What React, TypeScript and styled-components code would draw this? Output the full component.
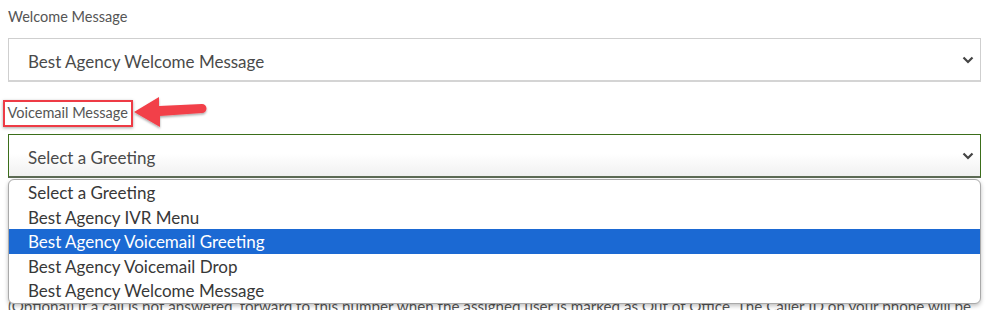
import styled, { createGlobalStyle } from 'styled-components';

const GlobalStyle = createGlobalStyle`
  html, body {
    margin: 0;
    padding: 0;
    background: #fff;
  }
  body {
    font-family: Lato, "Noto Sans", sans-serif;
    overflow: hidden;
  }
`;

const Page = styled.div`
  width: 987px;
  height: 310px;
  padding: 8px 6px 0 8px;
  box-sizing: border-box;
  overflow: hidden;
`;

const Field = styled.div`
  display: flex;
  flex-direction: column;
`;

const SelectWrap = styled.div`
  position: relative;
`;

const Label = styled.div`
  font-size: 14.5px;
  color: #555;
  line-height: 18px;
  height: 18px;
  white-space: nowrap;
`;

const LabelRow = styled.div`
  display: flex;
  align-items: center;
  height: 28px;
  margin: 17px 0 7px -5px;
`;

const Highlight = styled.div`
  border: 2.5px solid #ee3b45;
  padding: 2.5px 3px 2.5px 2.5px;
  box-shadow: 0 1px 3px rgba(0, 0, 0, 0.35);
`;

const Arrow = styled.svg`
  display: block;
  flex-shrink: 0;
  margin-left: -1px;
`;

const Select = styled.div<{ $focused?: boolean }>`
  display: flex;
  align-items: center;
  justify-content: space-between;
  height: 44px;
  box-sizing: border-box;
  padding: 4px 6px 0 19px;
  border: 1px solid ${p => (p.$focused ? '#3b6e1a' : '#cfcfcf')};
  border-bottom: 2px solid ${p => (p.$focused ? '#5d6b55' : '#d4d4d4')};
  background: ${p =>
    p.$focused ? 'linear-gradient(#fff 0%, #fff 45%, #f1f1f1 100%)' : '#fff'};
  font-size: 17px;
  color: #4a4a4a;
`;

const FirstSelect = styled(Select)`
  margin-top: 12px;
`;

const Chevron = styled.svg`
  display: block;
  margin-top: -4px;
`;

const Menu = styled.ul`
  position: absolute;
  top: 100%;
  left: 0;
  right: 0;
  margin: 1px 0 0;
  padding: 0;
  list-style: none;
  background: #fff;
  border: 1px solid #a9a9a9;
  border-radius: 6px;
  box-shadow: 0 2px 4px rgba(0, 0, 0, 0.25);
  overflow: hidden;
  z-index: 2;
`;

const Option = styled.li<{ $active?: boolean }>`
  height: 24.6px;
  line-height: 24.6px;
  padding: 1px 0 0 19px;
  box-sizing: border-box;
  font-size: 17px;
  color: ${p => (p.$active ? '#fff' : '#383838')};
  background: ${p => (p.$active ? '#1b69d3' : 'transparent')};
`;

const Help = styled.p`
  margin: 119px 0 0;
  font-size: 15.2px;
  line-height: 18px;
  color: #555;
  white-space: nowrap;
`;

const ChevronIcon = () => (
  <Chevron width="12" height="8" viewBox="0 0 12 8">
    <path d="M1.5 1.5 L6 6 L10.5 1.5" fill="none" stroke="#444" strokeWidth="2.2" />
  </Chevron>
);

const options = [
  'Select a Greeting',
  'Best Agency IVR Menu',
  'Best Agency Voicemail Greeting',
  'Best Agency Voicemail Drop',
  'Best Agency Welcome Message',
];

export default function App() {
  return (
    <>
      <GlobalStyle />
      <Page>
        <Field>
          <Label>Welcome Message</Label>
          <FirstSelect>
            <span>Best Agency Welcome Message</span>
            <ChevronIcon />
          </FirstSelect>
        </Field>

        <LabelRow>
          <Highlight>
            <Label>Voicemail Message</Label>
          </Highlight>
          <Arrow width="80" height="36" viewBox="0 0 80 36">
            <defs>
              <filter id="sh" x="-20%" y="-30%" width="140%" height="160%">
                <feDropShadow dx="0" dy="1.5" stdDeviation="1.2" floodColor="#000" floodOpacity="0.35" />
              </filter>
            </defs>
            <path
              d="M2 17 L27 2 L27 11 L70 9 A4.5 4.5 0 0 1 70 18 L28 21 L28 32 Z"
              fill="#f2414a"
              filter="url(#sh)"
            />
          </Arrow>
        </LabelRow>

        <Field>
          <SelectWrap>
            <Select $focused>
              <span>Select a Greeting</span>
              <ChevronIcon />
            </Select>
            <Menu>
              {options.map((o, i) => (
                <Option key={o} $active={i === 2}>
                  {o}
                </Option>
              ))}
            </Menu>
          </SelectWrap>
          <Help>
            (Optional) If a call is not answered, forward to this number when the assigned user is
            marked as Out of Office. The Caller ID on your phone will be
          </Help>
        </Field>
      </Page>
    </>
  );
}
